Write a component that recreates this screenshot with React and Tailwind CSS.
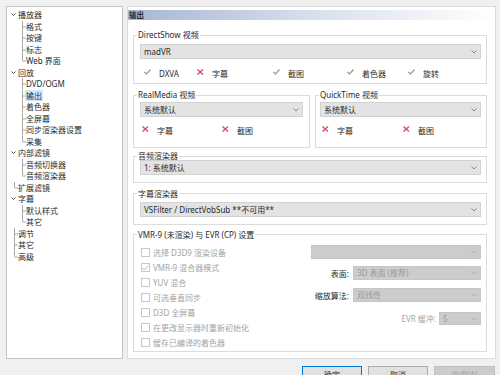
import React from 'react';

const tree = [
  { label: '播放器', kind: 'open' },
  { label: '格式', kind: 'child' },
  { label: '按键', kind: 'child' },
  { label: '标志', kind: 'child' },
  { label: 'Web 界面', kind: 'child', last: true },
  { label: '回放', kind: 'open' },
  { label: 'DVD/OGM', kind: 'child' },
  { label: '输出', kind: 'child', selected: true },
  { label: '着色器', kind: 'child' },
  { label: '全屏幕', kind: 'child' },
  { label: '同步渲染器设置', kind: 'child' },
  { label: '采集', kind: 'child', last: true },
  { label: '内部滤镜', kind: 'open' },
  { label: '音频切换器', kind: 'child' },
  { label: '音频渲染器', kind: 'child', last: true },
  { label: '扩展滤镜', kind: 'leaf', last: true },
  { label: '字幕', kind: 'open' },
  { label: '默认样式', kind: 'child' },
  { label: '其它', kind: 'child', last: true },
  { label: '调节', kind: 'leaf' },
  { label: '其它', kind: 'leaf' },
  { label: '高级', kind: 'leaf', last: true },
];

const LINE = '#a8a8a8';

function TreeRow({ item }) {
  const mid = 5.5;
  let gutter;
  if (item.kind === 'child') {
    gutter = (
      <svg width="19" height="11.5" className="shrink-0">
        <line x1="15.5" y1="0" x2="15.5" y2={item.last ? mid : 11.5} stroke={LINE} />
        <line x1="15.5" y1={mid + 0.5} x2="19" y2={mid + 0.5} stroke={LINE} />
      </svg>
    );
  } else if (item.kind === 'leaf') {
    gutter = (
      <svg width="11" height="11.5" className="shrink-0">
        <line x1="7.5" y1="0" x2="7.5" y2={item.last ? mid : 11.5} stroke={LINE} />
        <line x1="7.5" y1={mid + 0.5} x2="11" y2={mid + 0.5} stroke={LINE} />
      </svg>
    );
  } else {
    gutter = (
      <svg width="11" height="11.5" className="shrink-0">
        <polyline points="4.5,4.5 6.5,6.5 8.5,4.5" fill="none" stroke="#555" strokeWidth="1" />
      </svg>
    );
  }
  return (
    <div className="flex h-[11.5px] items-center">
      {gutter}
      <span className={item.selected ? '-ml-[1px] bg-[#cce8ff] px-[1px] leading-[11px]' : 'leading-[11px]'}>
        {item.label}
      </span>
    </div>
  );
}

function Check() {
  return (
    <svg width="7" height="6" className="shrink-0 -mt-[3px]">
      <polyline points="0.5,3 2.5,5 6.5,0.5" fill="none" stroke="#7fa37f" strokeWidth="1.2" />
    </svg>
  );
}

function Cross() {
  return (
    <svg width="7" height="6" className="shrink-0 -mt-[3px]">
      <line x1="0.5" y1="0.5" x2="6" y2="5.5" stroke="#d8506a" strokeWidth="1.4" />
      <line x1="6" y1="0.5" x2="0.5" y2="5.5" stroke="#d8506a" strokeWidth="1.4" />
    </svg>
  );
}

function Feature({ ok, label, w }) {
  return (
    <div className={`flex items-center ${w}`}>
      {ok ? <Check /> : <Cross />}
      <span className="ml-[8px] leading-[11px]">{label}</span>
    </div>
  );
}

function Select({ value, disabled, className = '' }) {
  return (
    <div
      className={`flex items-center justify-between border px-[3px] ${
        disabled ? 'border-[#c6c6c6] bg-[#cccccc] text-[#9a9a9a]' : 'border-[#d2d2d2] bg-[#e3e3e3] text-[#2a2a2a]'
      } ${className}`}
    >
      <span className="whitespace-nowrap leading-[10px]">{value}</span>
      <svg width="6" height="4" className="shrink-0">
        <polyline points="0.5,0.5 3,3 5.5,0.5" fill="none" stroke={disabled ? '#b0b0b0' : '#8a8a8a'} />
      </svg>
    </div>
  );
}

function Group({ title, className = '', children }) {
  return (
    <fieldset className={`border border-[#dcdcdc] ${className}`}>
      <legend className="ml-[3px] px-[1px] leading-[8px]">{title}</legend>
      {children}
    </fieldset>
  );
}

function Box({ label, checked }) {
  return (
    <div className="flex h-[15px] items-center">
      <span className="flex h-[9px] w-[9px] items-center justify-center border border-[#c8c8c8] bg-white">
        {checked && (
          <svg width="7" height="6">
            <polyline points="0.5,3 2.5,5 6.5,0.5" fill="none" stroke="#b4b4b4" strokeWidth="1" />
          </svg>
        )}
      </span>
      <span className="ml-[3px] leading-[11px] text-[#a4a4a4]">{label}</span>
    </div>
  );
}

export default function App() {
  return (
    <div className="h-[375px] w-[500px] overflow-hidden bg-[#f0f0f0] pl-[6px] pt-[6px] font-['Noto_Sans','Noto_Sans_CJK_SC',sans-serif] text-[8px] text-[#2a2a2a]">
      <div className="flex h-[353px] gap-[4px]">
        {/* tree */}
        <div className="w-[117px] shrink-0 border border-[#c4c4c4] bg-white pt-[2px]">
          {tree.map((item, i) => (
            <TreeRow key={i} item={item} />
          ))}
        </div>

        {/* page */}
        <div className="w-[369px] shrink-0 border border-[#dcdcdc] bg-white">
          <div className="mt-[3px] h-[10px] bg-linear-to-r from-[#a7b6d3] via-[#d8dfec] to-white pl-[1px] text-[7.5px] font-bold leading-[10px]">
            输出
          </div>
          <div className="pl-[5px] pr-[8px]">
            <Group title="DirectShow 视频" className="mt-[11px]">
              <div className="pl-[6px] pr-[5px] pb-[4px]">
                <Select value="madVR" className="mt-[5px] h-[15px]" />
                <div className="mt-[8px] flex h-[12px] items-center pl-[4px]">
                  <Feature ok label="DXVA" w="w-[53px]" />
                  <Feature label="字幕" w="w-[76px]" />
                  <Feature ok label="截图" w="w-[74px]" />
                  <Feature ok label="着色器" w="w-[61px]" />
                  <Feature ok label="旋转" w="w-[50px]" />
                </div>
              </div>
            </Group>

            <div className="mt-[7px] flex gap-[5px]">
              <Group title="RealMedia 视频" className="w-[177px]">
                <div className="pl-[6px] pr-[6px] pb-[11px]">
                  <Select value="系统默认" className="mt-[3px] h-[15px]" />
                  <div className="mt-[7px] flex h-[12px] items-center pl-[2px]">
                    <Feature label="字幕" w="w-[80px]" />
                    <Feature label="截图" w="w-[60px]" />
                  </div>
                </div>
              </Group>
              <Group title="QuickTime 视频" className="flex-1">
                <div className="pl-[4px] pr-[5px] pb-[11px]">
                  <Select value="系统默认" className="mt-[3px] h-[15px]" />
                  <div className="mt-[7px] flex h-[12px] items-center pl-[2px]">
                    <Feature label="字幕" w="w-[81px]" />
                    <Feature label="截图" w="w-[60px]" />
                  </div>
                </div>
              </Group>
            </div>

            <Group title="音频渲染器" className="mt-[4px]">
              <div className="pl-[6px] pr-[5px] pb-[7px]">
                <Select value="1: 系统默认" className="h-[15px]" />
              </div>
            </Group>

            <Group title="字幕渲染器" className="mt-[6.5px]">
              <div className="pl-[6px] pr-[5px] pb-[7px]">
                <Select value="VSFilter / DirectVobSub **不可用**" className="mt-[4.5px] h-[15px]" />
              </div>
            </Group>

            <Group title="VMR-9 (未渲染) 与 EVR (CP) 设置" className="mt-[5.5px]">
              <div className="flex pl-[7px] pr-[5px] pb-[1px] pt-[6.5px]">
                <div className="flex-1">
                  <Box label="选择 D3D9 渲染设备" />
                  <Box label="VMR-9 混合器模式" checked />
                  <Box label="YUV 混合" />
                  <Box label="可选垂直同步" />
                  <Box label="D3D 全屏幕" />
                  <Box label="在更改显示器时重新初始化" />
                  <Box label="缓存已编译的着色器" />
                </div>
                <div className="w-[170px]">
                  <Select value="" disabled className="h-[14px]" />
                  <div className="mt-[7px] flex items-center justify-end">
                    <span className="mr-[4px] leading-[11px]">表面:</span>
                    <Select value="3D 表面 (推荐)" disabled className="h-[14px] w-[128px]" />
                  </div>
                  <div className="mt-[8px] flex items-center justify-end">
                    <span className="mr-[4px] leading-[11px]">缩放算法:</span>
                    <Select value="双线性" disabled className="h-[14px] w-[128px]" />
                  </div>
                  <div className="mt-[10px] flex items-center justify-end">
                    <span className="mr-[3px] leading-[11px] text-[#a4a4a4]">EVR 缓冲:</span>
                    <Select value="5" disabled className="h-[13px] w-[42px]" />
                  </div>
                </div>
              </div>
            </Group>
          </div>
        </div>
      </div>

      <div className="mt-[7px] flex justify-end gap-[6px] pr-[5px]">
        <button className="flex h-[18px] w-[60px] items-center justify-center border border-[#0078d7] bg-[#e1e1e1]">确定</button>
        <button className="flex h-[18px] w-[60px] items-center justify-center border border-[#adadad] bg-[#e1e1e1]">取消</button>
        <button className="flex h-[18px] w-[61px] items-center justify-center border border-[#bfbfbf] bg-[#cccccc] text-[#a0a0a0]">应用(A)</button>
      </div>
    </div>
  );
}
